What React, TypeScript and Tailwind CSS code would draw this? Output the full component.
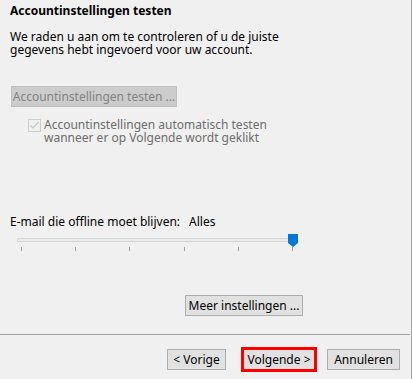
const ticks = [0, 1, 2, 3, 4, 5];

const WinButton = ({ label, className = "" }: { label: string; className?: string }) => (
  <button
    className={`h-[21px] border border-[#adadad] bg-[#e1e1e1] text-[12px] text-black leading-none ${className}`}
  >
    {label}
  </button>
);

export default function App() {
  return (
    <div
      className="w-[412px] h-[379px] bg-[#f0f0f0] border-r border-[#a0a0a0] flex flex-col text-[12px] text-black"
      style={{ fontFamily: '"Noto Sans", "Open Sans", sans-serif' }}
    >
      <div className="flex-1 flex flex-col pl-[10px] pt-[3px]">
        <h1 className="font-bold text-[12px] leading-[16px]">Accountinstellingen testen</h1>
        <p className="mt-[11px] leading-[13px]">
          We raden u aan om te controleren of u de juiste
          <br />
          gegevens hebt ingevoerd voor uw account.
        </p>

        <div className="mt-[30px] ml-[1px] w-[166px] h-[21px] border border-[#bfbfbf] bg-[#cccccc] text-[#838383] flex items-center justify-center">
          Accountinstellingen testen ...
        </div>

        <div className="mt-[11px] ml-[18px] flex gap-[3px]">
          <div className="w-[13px] h-[13px] border border-[#cccccc] bg-[#f0f0f0] flex items-center justify-center shrink-0 mt-[1px]">
            <svg width="11" height="11" viewBox="0 0 11 11">
              <path d="M1.5 5.5 L4 8 L9.5 2" fill="none" stroke="#c4c4c4" strokeWidth="1.2" />
            </svg>
          </div>
          <p className="text-[#6d6d6d] leading-[13px]">
            Accountinstellingen automatisch testen
            <br />
            wanneer er op Volgende wordt geklikt
          </p>
        </div>

        <div className="mt-[69px] flex">
          <span>E-mail die offline moet blijven:</span>
          <span className="ml-[9px]">Alles</span>
        </div>

        <div className="mt-[3px] ml-[7px] w-[282px] relative h-[22px]">
          <div className="absolute left-0 top-[4px] w-[276px] h-[4px] bg-[#e7eaea] border border-[#d6d6d6]" />
          <svg className="absolute left-[271px] top-0" width="10" height="13" viewBox="0 0 10 13">
            <path d="M0 0 H10 V9 L5 13 L0 9 Z" fill="#0078d7" />
          </svg>
          <div className="absolute left-[4px] top-[13px] w-[272px] flex justify-between">
            {ticks.map((t) => (
              <div key={t} className="w-px h-[4px] bg-[#a0a0a0]" />
            ))}
          </div>
        </div>

        <div className="mt-[39px] pl-[175px]">
          <WinButton label="Meer instellingen ..." className="w-[118px]" />
        </div>
      </div>

      <div className="h-px bg-[#a0a0a0] mr-[1px]" />

      <div className="h-[44px] flex items-start pt-[14px] pl-[167px]">
        <WinButton label="< Vorige" className="w-[59px]" />
        <div className="relative ml-[17px] flex">
          <WinButton label="Volgende >" className="w-[72px]" />
          <div className="absolute -inset-[2px] border-[3px] border-[#ff0000]" />
        </div>
        <WinButton label="Annuleren" className="w-[73px] ml-[12px]" />
      </div>
    </div>
  );
}
